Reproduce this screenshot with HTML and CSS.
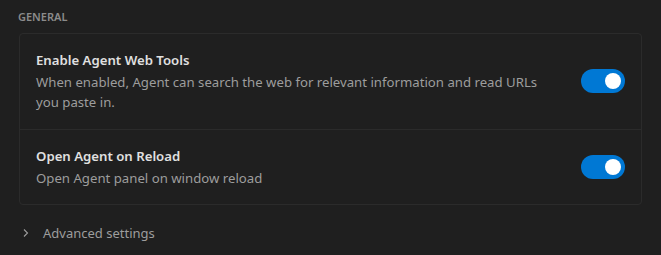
FILE: index.html
```html
<!DOCTYPE html>
<html>
<head>
<meta charset="utf-8">
<link rel="stylesheet" href="styles.css">
</head>
<body>
<div class="page">
  <div class="section-title">General</div>
  <div class="card">
    <div class="row">
      <div class="text">
        <div class="title">Enable Agent Web Tools</div>
        <div class="desc">When enabled, Agent can search the web for relevant information and read URLs you paste in.</div>
      </div>
      <div class="toggle on"><span class="knob"></span></div>
    </div>
    <div class="row">
      <div class="text">
        <div class="title">Open Agent on Reload</div>
        <div class="desc">Open Agent panel on window reload</div>
      </div>
      <div class="toggle on"><span class="knob"></span></div>
    </div>
  </div>
  <div class="advanced">
    <svg class="chev" width="8" height="10" viewBox="0 0 8 10"><path d="M2 1.5 L5.5 5 L2 8.5" fill="none" stroke="#9d9d9d" stroke-width="1.1"/></svg>
    <span>Advanced settings</span>
  </div>
</div>
</body>
</html>
```
FILE: styles.css
```css
html, body {
  margin: 0;
  padding: 0;
  background: #1f1f1f;
}
body {
  font-family: "Noto Sans", "Open Sans", sans-serif;
  font-size: 13px;
  width: 661px;
  height: 255px;
  overflow: hidden;
}
.page {
  padding: 8px 19px 0 19px;
}
.section-title {
  text-transform: uppercase;
  font-size: 11px;
  font-weight: 600;
  color: #8b8b8b;
  line-height: 17px;
  margin-left: -1px;
  margin-bottom: 8px;
}
.card {
  width: 621px;
  border: 1px solid #2b2b2b;
  border-radius: 4px;
}
.row {
  display: flex;
  align-items: center;
  padding: 16px 16px 17px 16px;
}
.row + .row {
  border-top: 1px solid #2b2b2b;
  padding-bottom: 16px;
}
.text {
  flex: 1;
  max-width: 512px;
  font-size: 13.2px;
}
.title {
  color: #e0e0e0;
  font-weight: 600;
  line-height: 20px;
  margin-bottom: 2px;
}
.desc {
  color: #9d9d9d;
  line-height: 20px;
}
.toggle {
  margin-left: auto;
  margin-right: 0;
  width: 44px;
  height: 24px;
  border-radius: 12px;
  background: #0078d4;
  display: flex;
  align-items: center;
  justify-content: flex-end;
  padding: 0 4px;
  box-sizing: border-box;
  flex-shrink: 0;
}
.knob {
  width: 16px;
  height: 16px;
  border-radius: 50%;
  background: #ffffff;
}
.advanced {
  display: flex;
  align-items: center;
  margin-top: 18px;
  color: #9d9d9d;
  line-height: 20px;
}
.chev {
  margin-left: 3px;
  margin-right: 13px;
}
```
